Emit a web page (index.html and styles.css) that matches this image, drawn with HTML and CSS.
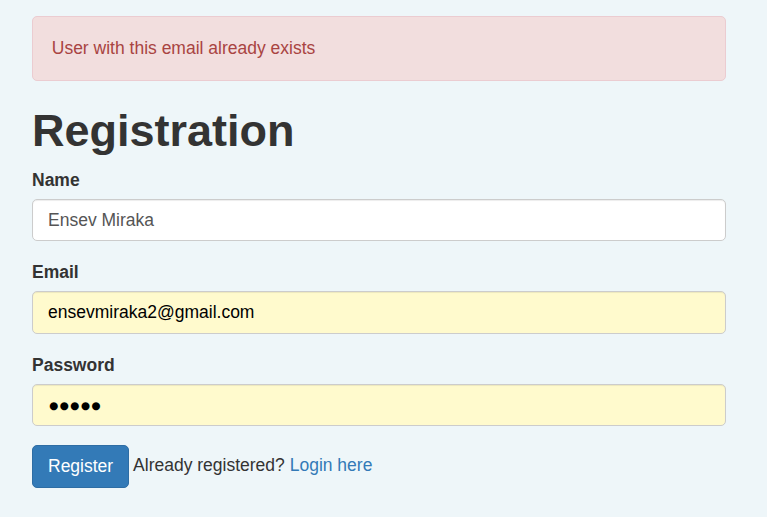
FILE: index.html
```html
<!DOCTYPE html>
<html lang="en">
<head>
<meta charset="utf-8">
<title>Registration</title>
<link rel="stylesheet" href="styles.css">
</head>
<body>
<div class="container">
  <div class="alert">User with this email already exists</div>
  <h1 class="title">Registration</h1>
  <form class="form">
    <div class="form-group">
      <label class="label" for="name">Name</label>
      <input class="form-control" id="name" type="text" value="Ensev Miraka">
    </div>
    <div class="form-group">
      <label class="label" for="email">Email</label>
      <input class="form-control autofill" id="email" type="email" value="ensevmiraka2@gmail.com">
    </div>
    <div class="form-group">
      <label class="label" for="password">Password</label>
      <input class="form-control autofill dots" id="password" type="text" value="●●●●●">
    </div>
    <button class="btn" type="button">Register</button> Already registered? <a class="link" href="#">Login here</a>
  </form>
</div>
</body>
</html>
```
FILE: styles.css
```css
html, body {
  margin: 0;
  padding: 0;
  background: #eef6f9;
}
body {
  font-family: "Liberation Sans", Arial, sans-serif;
  font-size: 17.5px;
  line-height: 25px;
  color: #333;
}
.container {
  width: 694px;
  padding: 16px 0 0 32px;
}
.alert {
  padding: 18.75px;
  border: 1px solid #ebccd1;
  border-radius: 5px;
  background: #f2dede;
  color: #a94442;
  margin: 0 0 25px;
}
.title {
  font-size: 45px;
  line-height: 1.1;
  font-weight: 700;
  margin: 25px 0 12.5px;
  color: #333;
}
.form {
  margin: 0;
}
.form-group {
  margin-bottom: 18.75px;
}
.label {
  display: block;
  font-weight: 700;
  margin-bottom: 6.25px;
}
.form-control {
  display: block;
  box-sizing: border-box;
  width: 100%;
  height: 42.5px;
  padding: 7.5px 15px;
  margin: 0;
  font-family: "Liberation Sans", Arial, "DejaVu Sans", sans-serif;
  font-size: 17.5px;
  line-height: 25px;
  color: #555;
  background: #fff;
  border: 1px solid #ccc;
  border-radius: 5px;
  box-shadow: inset 0 1px 1px rgba(0,0,0,.075);
  outline: none;
}
.autofill {
  background: #fffacd;
  color: #000;
}
.dots {
  font-family: "DejaVu Sans", sans-serif;
  font-size: 10.5px;
  letter-spacing: 1.4px;
  padding-left: 16px;
}
.btn {
  display: inline-block;
  box-sizing: border-box;
  height: 42.5px;
  padding: 7.5px 15px;
  font-family: "Liberation Sans", Arial, sans-serif;
  font-size: 17.5px;
  line-height: 25px;
  color: #fff;
  background: #337ab7;
  border: 1px solid #2e6da4;
  border-radius: 5px;
  vertical-align: middle;
  cursor: pointer;
}
.link {
  color: #337ab7;
  text-decoration: none;
}
```
